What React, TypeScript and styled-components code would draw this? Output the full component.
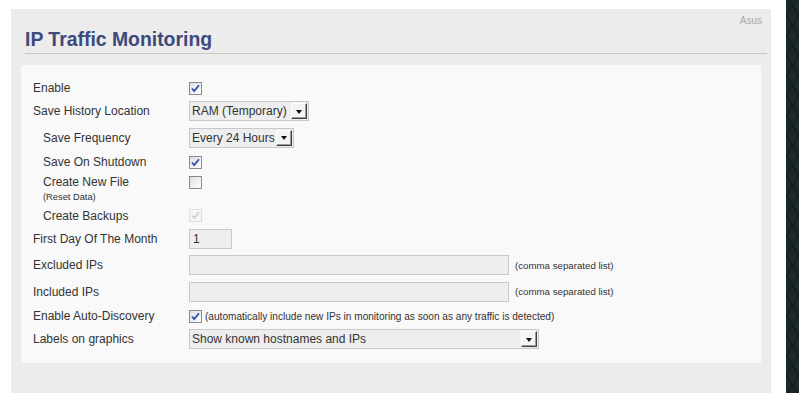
import styled, { createGlobalStyle } from 'styled-components';

const GlobalStyle = createGlobalStyle`
  html, body {
    margin: 0;
    padding: 0;
    background: #ffffff;
  }
  body {
    font-family: 'Liberation Sans', Arial, sans-serif;
    color: #333333;
    overflow: hidden;
  }
`;

const Checkbox = ({ checked, disabled }: { checked?: boolean; disabled?: boolean }) => (
  <Box $disabled={disabled}>
    {checked && (
      <svg width="11" height="11" viewBox="0 0 11 11">
        <path
          d="M2 5.5 L4.2 8 L9 2.2"
          fill="none"
          stroke={disabled ? '#d0d0d0' : '#2f4fa8'}
          strokeWidth="1.8"
        />
      </svg>
    )}
  </Box>
);

const Dropdown = ({ value, width }: { value: string; width: number }) => (
  <SelectBox style={{ width }}>
    <SelectText>{value}</SelectText>
    <SelectButton>
      <Arrow />
    </SelectButton>
  </SelectBox>
);

const App = () => {
  return (
    <Page>
      <GlobalStyle />
      <Panel>
        <Brand>Asus</Brand>
        <Title>IP Traffic Monitoring</Title>
        <Rule />
        <Form>
          <Row $h={22}>
            <Label>Enable</Label>
            <Checkbox checked />
          </Row>
          <Row $h={24}>
            <Label>Save History Location</Label>
            <Dropdown value="RAM (Temporary)" width={120} />
          </Row>
          <Row $h={29}>
            <Label $indent>Save Frequency</Label>
            <Dropdown value="Every 24 Hours" width={105} />
          </Row>
          <Row $h={20}>
            <Label $indent>Save On Shutdown</Label>
            <Checkbox checked />
          </Row>
          <Row $h={33} $top>
            <Label $indent>
              <LabelLine>Create New File</LabelLine>
              <SubLine>(Reset Data)</SubLine>
            </Label>
            <CheckSlot>
              <Checkbox />
            </CheckSlot>
          </Row>
          <Row $h={21}>
            <Label $indent>Create Backups</Label>
            <Checkbox checked disabled />
          </Row>
          <Row $h={26}>
            <Label>First Day Of The Month</Label>
            <TextInput $w={43}>1</TextInput>
          </Row>
          <Row $h={26}>
            <Label>Excluded IPs</Label>
            <TextInput $w={320} />
            <Note $gap={6} $size={9.7}>(comma separated list)</Note>
          </Row>
          <Row $h={27}>
            <Label>Included IPs</Label>
            <TextInput $w={320} />
            <Note $gap={6} $size={9.7}>(comma separated list)</Note>
          </Row>
          <Row $h={22}>
            <Label>Enable Auto-Discovery</Label>
            <Checkbox checked />
            <Note $gap={3} $size={10.1}>
              (automatically include new IPs in monitoring as soon as any traffic is detected)
            </Note>
          </Row>
          <Row $h={24}>
            <Label>Labels on graphics</Label>
            <Dropdown value="Show known hostnames and IPs" width={350} />
          </Row>
        </Form>
      </Panel>
      <Strip />
    </Page>
  );
};

export default App;

const Page = styled.div`
  display: flex;
  justify-content: space-between;
  align-items: flex-start;
  height: 100vh;
  padding-left: 11px;
  box-sizing: border-box;
`;

const Panel = styled.div`
  width: 760px;
  height: calc(100vh - 9px);
  margin-top: 9px;
  padding-top: 6px;
  box-sizing: border-box;
  background: #ececec;
`;

const Brand = styled.div`
  height: 12px;
  padding-right: 9px;
  text-align: right;
  font-size: 10px;
  line-height: 12px;
  color: #a9a9a9;
`;

const Title = styled.h1`
  margin: 1px 0 3px 14px;
  font-size: 19.4px;
  line-height: 22px;
  font-weight: bold;
  color: #3c4a7c;
`;

const Rule = styled.div`
  height: 1px;
  margin: 0 4px 0 14px;
  background: #c8c8c8;
`;

const Form = styled.div`
  margin: 11px 10px 0;
  padding: 12px 12px 12px;
  background: #f9f9f9;
`;

const Row = styled.div<{ $h: number; $top?: boolean }>`
  display: flex;
  align-items: ${(p) => (p.$top ? 'flex-start' : 'center')};
  height: ${(p) => p.$h}px;
  font-size: 12px;
`;

const Label = styled.div<{ $indent?: boolean }>`
  width: 156px;
  flex-shrink: 0;
  box-sizing: border-box;
  padding-left: ${(p) => (p.$indent ? 10 : 0)}px;
  font-size: 12px;
  line-height: 14px;
  color: #333333;
`;

const LabelLine = styled.div`
  height: 20px;
  line-height: 21px;
`;

const SubLine = styled.div`
  font-size: 9.3px;
  line-height: 10px;
`;

const CheckSlot = styled.div`
  padding-top: 4px;
`;

const Box = styled.span<{ $disabled?: boolean }>`
  display: inline-flex;
  align-items: center;
  justify-content: center;
  width: 13px;
  height: 13px;
  box-sizing: border-box;
  border: 1px solid ${(p) => (p.$disabled ? '#dedede' : '#8a8a8a')};
  background: ${(p) =>
    p.$disabled ? '#f6f6f6' : 'linear-gradient(135deg, #dcdfe6 0%, #f4f4f6 70%, #ffffff 100%)'};
  flex-shrink: 0;
`;

const SelectBox = styled.div`
  display: flex;
  align-items: center;
  justify-content: space-between;
  height: 20px;
  box-sizing: border-box;
  border: 1px solid #c8c8c8;
  background: #eeeeee;
  padding: 0 1px 0 2px;
`;

const SelectText = styled.span`
  font-size: 12px;
  color: #333333;
  white-space: nowrap;
`;

const SelectButton = styled.div`
  display: flex;
  align-items: center;
  justify-content: center;
  width: 16px;
  height: 16px;
  box-sizing: border-box;
  border-style: solid;
  border-width: 1px;
  border-color: #ffffff #404040 #404040 #ffffff;
  box-shadow: inset -1px -1px 0 #9a9a9a;
  background: #f4f4f4;
`;

const Arrow = styled.span`
  width: 0;
  height: 0;
  border-left: 3.5px solid transparent;
  border-right: 3.5px solid transparent;
  border-top: 4px solid #111111;
  margin-top: 1px;
`;

const TextInput = styled.div<{ $w: number }>`
  width: ${(p) => p.$w}px;
  height: 20px;
  box-sizing: border-box;
  border: 1px solid #c8c8c8;
  background: #eeeeee;
  padding-left: 3px;
  font-size: 12px;
  line-height: 18px;
  color: #333333;
`;

const Note = styled.span<{ $gap: number; $size: number }>`
  margin-left: ${(p) => p.$gap}px;
  font-size: ${(p) => p.$size}px;
  color: #333333;
  white-space: nowrap;
`;

const Strip = styled.div`
  width: 13px;
  height: 100vh;
  flex-shrink: 0;
  background-color: #1b292d;
  background-image: repeating-linear-gradient(
      60deg,
      transparent 0 9px,
      rgba(8, 16, 18, 0.7) 9px 10px
    ),
    repeating-linear-gradient(
      -60deg,
      transparent 0 9px,
      rgba(8, 16, 18, 0.5) 9px 10px
    );
`;
